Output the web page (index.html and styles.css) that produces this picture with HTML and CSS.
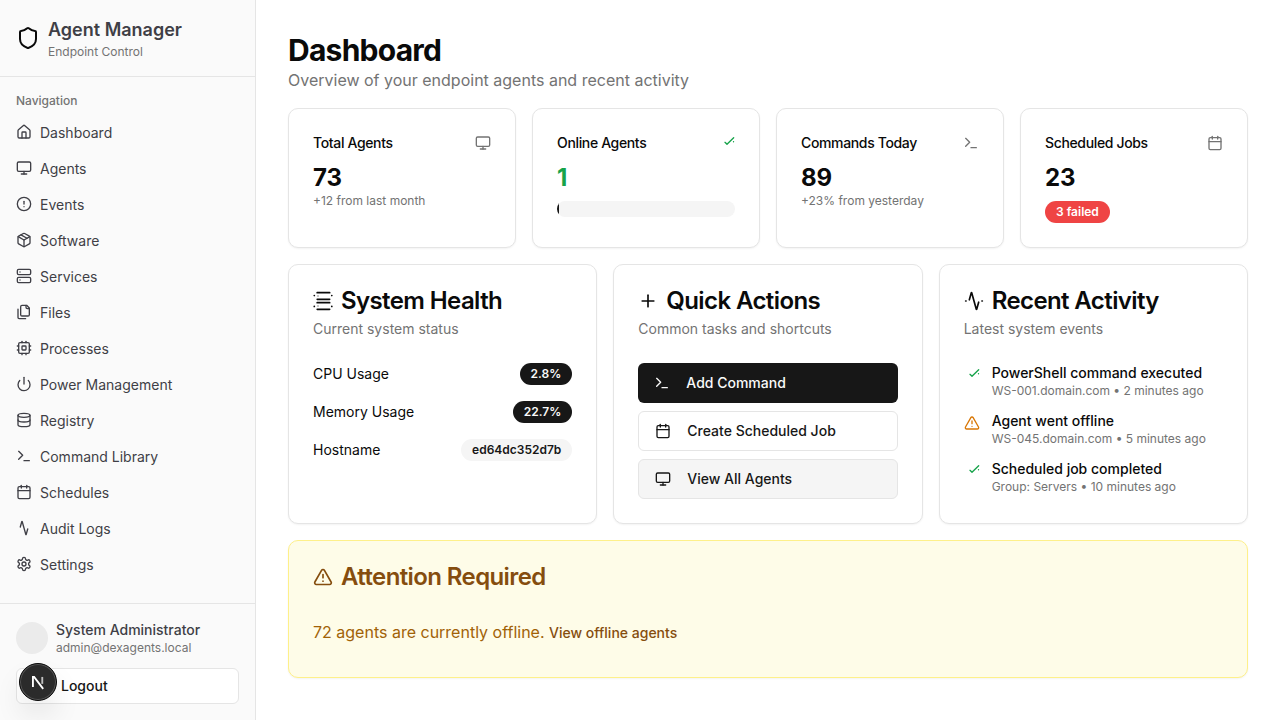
FILE: index.html
```html
<!DOCTYPE html>
<html>
<head>
	<meta charset="utf-8">
	<meta name="viewport" content="width=device-width, initial-scale=1">
	<title>Agent Manager</title>
	<link rel="stylesheet" href="styles.css">
</head>
<body>

<svg class="sprite" xmlns="http://www.w3.org/2000/svg">
	<symbol id="i-shield" viewBox="0 0 24 24"><path d="M20 13c0 5-3.500 7.500-7.660 8.950a1 1 0 0 1-.670-.010C7.500 20.500 4 18 4 13V6a1 1 0 0 1 1-1c2 0 4.500-1.200 6.240-2.720a1.170 1.170 0 0 1 1.520 0C14.510 3.810 17 5 19 5a1 1 0 0 1 1 1z"/></symbol>
	<symbol id="i-home" viewBox="0 0 24 24"><path d="M15 21v-8a1 1 0 0 0-1-1h-4a1 1 0 0 0-1 1v8"/><path d="M3 10a2 2 0 0 1 .709-1.528l7-5.999a2 2 0 0 1 2.582 0l7 5.999A2 2 0 0 1 21 10v9a2 2 0 0 1-2 2H5a2 2 0 0 1-2-2z"/></symbol>
	<symbol id="i-monitor" viewBox="0 0 24 24"><rect width="20" height="14" x="2" y="3" rx="2"/><line x1="8" x2="16" y1="21" y2="21"/><line x1="12" x2="12" y1="17" y2="21"/></symbol>
	<symbol id="i-alert" viewBox="0 0 24 24"><circle cx="12" cy="12" r="10"/><line x1="12" x2="12" y1="8" y2="12"/><line x1="12" x2="12.010" y1="16" y2="16"/></symbol>
	<symbol id="i-package" viewBox="0 0 24 24"><path d="M11 21.730a2 2 0 0 0 2 0l7-4A2 2 0 0 0 21 16V8a2 2 0 0 0-1-1.730l-7-4a2 2 0 0 0-2 0l-7 4A2 2 0 0 0 3 8v8a2 2 0 0 0 1 1.730z"/><path d="M12 22V12"/><path d="m3.300 7 8.700 5 8.700-5"/><path d="m7.500 4.270 9 5.150"/></symbol>
	<symbol id="i-server" viewBox="0 0 24 24"><rect width="20" height="8" x="2" y="2" rx="2"/><rect width="20" height="8" x="2" y="14" rx="2"/><line x1="6" x2="6.010" y1="6" y2="6"/><line x1="6" x2="6.010" y1="18" y2="18"/></symbol>
	<symbol id="i-server-open" viewBox="0 0 24 24"><path d="M5 2h15"/><path d="M5 10h15"/><path d="M5 14h15"/><path d="M5 22h15"/><path d="M1.500 5.500h.1"/><path d="M1.500 18.500h.1"/><path d="M22.500 5.500h.1"/><path d="M22.500 18.500h.1"/><path d="M6 6h.01" class="thin"/><path d="M6 18h.01" class="thin"/></symbol>
	<symbol id="i-files" viewBox="0 0 24 24"><path d="M20 7h-3a2 2 0 0 1-2-2V2"/><path d="M9 18a2 2 0 0 1-2-2V4a2 2 0 0 1 2-2h7l4 4v10a2 2 0 0 1-2 2Z"/><path d="M3 7.600v12.800A1.600 1.600 0 0 0 4.600 22h9.800"/></symbol>
	<symbol id="i-cpu" viewBox="0 0 24 24"><rect width="16" height="16" x="4" y="4" rx="2"/><rect width="6" height="6" x="9" y="9" rx="1"/><path d="M15 2v2"/><path d="M15 20v2"/><path d="M2 15h2"/><path d="M2 9h2"/><path d="M20 15h2"/><path d="M20 9h2"/><path d="M9 2v2"/><path d="M9 20v2"/></symbol>
	<symbol id="i-power" viewBox="0 0 24 24"><path d="M12 2v10"/><path d="M18.400 6.600a9 9 0 1 1-12.770.040"/></symbol>
	<symbol id="i-database" viewBox="0 0 24 24"><ellipse cx="12" cy="5" rx="9" ry="3"/><path d="M3 5v14a9 3 0 0 0 18 0V5"/><path d="M3 12a9 3 0 0 0 18 0"/></symbol>
	<symbol id="i-terminal" viewBox="0 0 24 24"><polyline points="4 17 10 11 4 5"/><line x1="12" x2="20" y1="19" y2="19"/></symbol>
	<symbol id="i-calendar" viewBox="0 0 24 24"><path d="M8 2v4"/><path d="M16 2v4"/><rect width="18" height="18" x="3" y="4" rx="2"/><path d="M3 10h18"/></symbol>
	<symbol id="i-activity" viewBox="0 0 24 24"><path d="M17.590 13.460l-2.350 8.360a.25.25 0 0 1-.480 0L9.240 2.180a.25.25 0 0 0-.480 0l-2.350 8.360"/></symbol>
	<symbol id="i-activity-dots" viewBox="0 0 24 24"><path d="M17.590 13.460l-2.350 8.360a.25.25 0 0 1-.480 0L9.240 2.180a.25.25 0 0 0-.480 0l-2.350 8.360"/><path d="M2 12h.5"/><path d="M21.500 12h.5"/></symbol>
	<symbol id="i-settings" viewBox="0 0 24 24"><path d="M12.220 2h-.440a2 2 0 0 0-2 2v.180a2 2 0 0 1-1 1.730l-.430.250a2 2 0 0 1-2 0l-.150-.080a2 2 0 0 0-2.730.730l-.220.380a2 2 0 0 0 .730 2.730l.150.100a2 2 0 0 1 1 1.720v.510a2 2 0 0 1-1 1.740l-.150.090a2 2 0 0 0-.730 2.730l.220.380a2 2 0 0 0 2.730.730l.150-.080a2 2 0 0 1 2 0l.430.250a2 2 0 0 1 1 1.730V20a2 2 0 0 0 2 2h.440a2 2 0 0 0 2-2v-.180a2 2 0 0 1 1-1.730l.430-.250a2 2 0 0 1 2 0l.150.080a2 2 0 0 0 2.730-.730l.220-.390a2 2 0 0 0-.730-2.730l-.150-.080a2 2 0 0 1-1-1.740v-.500a2 2 0 0 1 1-1.740l.150-.090a2 2 0 0 0 .730-2.730l-.220-.380a2 2 0 0 0-2.730-.730l-.150.080a2 2 0 0 1-2 0l-.430-.250a2 2 0 0 1-1-1.730V4a2 2 0 0 0-2-2z"/><circle cx="12" cy="12" r="3"/></symbol>
	<symbol id="i-check" viewBox="0 0 24 24"><path d="M21.800 10A10 10 0 1 1 17 3.340" class="faint"/><path d="m9 11 3 3L22 4"/></symbol>
	<symbol id="i-plus" viewBox="0 0 24 24"><path d="M5 12h14"/><path d="M12 5v14"/></symbol>
	<symbol id="i-warning" viewBox="0 0 24 24"><path d="m21.730 18-8-14a2 2 0 0 0-3.480 0l-8 14A2 2 0 0 0 4 21h16a2 2 0 0 0 1.730-3"/><path d="M12 9v4"/><path d="M12 17h.010"/></symbol>
	<symbol id="i-next" viewBox="0 0 180 180"><path d="M52 128V52h9l68 90"/><path d="M122 52v52" class="fade"/></symbol>
</svg>

<div class="layout">
	<aside class="sidebar">
		<div class="brand">
			<svg class="icon icon-brand"><use href="#i-shield"/></svg>
			<div>
				<div class="brand-name">Agent Manager</div>
				<div class="brand-sub">Endpoint Control</div>
			</div>
		</div>

		<nav class="nav">
			<div class="nav-label">Navigation</div>
			<a class="nav-item"><svg class="icon"><use href="#i-home"/></svg>Dashboard</a>
			<a class="nav-item"><svg class="icon"><use href="#i-monitor"/></svg>Agents</a>
			<a class="nav-item"><svg class="icon"><use href="#i-alert"/></svg>Events</a>
			<a class="nav-item"><svg class="icon"><use href="#i-package"/></svg>Software</a>
			<a class="nav-item"><svg class="icon"><use href="#i-server"/></svg>Services</a>
			<a class="nav-item"><svg class="icon"><use href="#i-files"/></svg>Files</a>
			<a class="nav-item"><svg class="icon"><use href="#i-cpu"/></svg>Processes</a>
			<a class="nav-item"><svg class="icon"><use href="#i-power"/></svg>Power Management</a>
			<a class="nav-item"><svg class="icon"><use href="#i-database"/></svg>Registry</a>
			<a class="nav-item"><svg class="icon"><use href="#i-terminal"/></svg>Command Library</a>
			<a class="nav-item"><svg class="icon"><use href="#i-calendar"/></svg>Schedules</a>
			<a class="nav-item"><svg class="icon"><use href="#i-activity"/></svg>Audit Logs</a>
			<a class="nav-item"><svg class="icon"><use href="#i-settings"/></svg>Settings</a>
		</nav>

		<div class="user-box">
			<div class="user">
				<div class="avatar"></div>
				<div>
					<div class="user-name">System Administrator</div>
					<div class="user-mail">admin@dexagents.local</div>
				</div>
			</div>
			<button class="logout">Logout</button>
		</div>
		<div class="next-badge"><svg class="icon icon-next"><use href="#i-next"/></svg></div>
	</aside>

	<main class="main">
		<h1>Dashboard</h1>
		<p class="subtitle">Overview of your endpoint agents and recent activity</p>

		<section class="stats">
			<div class="card stat">
				<div class="stat-head"><span>Total Agents</span><svg class="icon icon-muted"><use href="#i-monitor"/></svg></div>
				<div class="stat-num">73</div>
				<div class="stat-note">+12 from last month</div>
			</div>
			<div class="card stat">
				<div class="stat-head"><span>Online Agents</span><svg class="icon icon-green"><use href="#i-check"/></svg></div>
				<div class="stat-num green">1</div>
				<div class="progress"><div class="progress-fill" style="width: 1.4%"></div></div>
			</div>
			<div class="card stat">
				<div class="stat-head"><span>Commands Today</span><svg class="icon icon-muted"><use href="#i-terminal"/></svg></div>
				<div class="stat-num">89</div>
				<div class="stat-note">+23% from yesterday</div>
			</div>
			<div class="card stat">
				<div class="stat-head"><span>Scheduled Jobs</span><svg class="icon icon-muted"><use href="#i-calendar"/></svg></div>
				<div class="stat-num">23</div>
				<span class="badge badge-red">3 failed</span>
			</div>
		</section>

		<section class="panels">
			<div class="card panel">
				<h2><svg class="icon icon-title"><use href="#i-server-open"/></svg>System Health</h2>
				<p class="panel-sub">Current system status</p>
				<div class="health">
					<div class="health-row"><span>CPU Usage</span><span class="badge badge-dark">2.8%</span></div>
					<div class="health-row"><span>Memory Usage</span><span class="badge badge-dark">22.7%</span></div>
					<div class="health-row"><span>Hostname</span><span class="badge badge-light">ed64dc352d7b</span></div>
				</div>
			</div>

			<div class="card panel">
				<h2><svg class="icon icon-title"><use href="#i-plus"/></svg>Quick Actions</h2>
				<p class="panel-sub">Common tasks and shortcuts</p>
				<div class="actions">
					<button class="action action-dark"><svg class="icon"><use href="#i-terminal"/></svg>Add Command</button>
					<button class="action"><svg class="icon"><use href="#i-calendar"/></svg>Create Scheduled Job</button>
					<button class="action action-grey"><svg class="icon"><use href="#i-monitor"/></svg>View All Agents</button>
				</div>
			</div>

			<div class="card panel">
				<h2><svg class="icon icon-title"><use href="#i-activity-dots"/></svg>Recent Activity</h2>
				<p class="panel-sub">Latest system events</p>
				<div class="events">
					<div class="event">
						<svg class="icon icon-green"><use href="#i-check"/></svg>
						<div>
							<div class="event-title">PowerShell command executed</div>
							<div class="event-note">WS-001.domain.com • 2 minutes ago</div>
						</div>
					</div>
					<div class="event">
						<svg class="icon icon-amber"><use href="#i-warning"/></svg>
						<div>
							<div class="event-title">Agent went offline</div>
							<div class="event-note">WS-045.domain.com • 5 minutes ago</div>
						</div>
					</div>
					<div class="event">
						<svg class="icon icon-green"><use href="#i-check"/></svg>
						<div>
							<div class="event-title">Scheduled job completed</div>
							<div class="event-note">Group: Servers • 10 minutes ago</div>
						</div>
					</div>
				</div>
			</div>
		</section>

		<section class="alert">
			<h2><svg class="icon icon-title"><use href="#i-warning"/></svg>Attention Required</h2>
			<p>72 agents are currently offline. <a>View offline agents</a></p>
		</section>
	</main>
</div>

</body>
</html>
```

FILE: styles.css
```css
* {
	box-sizing: border-box;
}
body {
	font-family: Inter, "Liberation Sans", sans-serif;
	margin: 0;
	background-color: #fff;
	color: #0a0a0a;
	overflow: hidden;
}
.sprite {
	display: none;
}
.icon {
	width: 16px;
	height: 16px;
	flex-shrink: 0;
	fill: none;
	stroke: currentColor;
	stroke-width: 2;
	stroke-linecap: round;
	stroke-linejoin: round;
}
.layout {
	display: flex;
	height: 720px;
}

/* Sidebar */
.sidebar {
	width: 256px;
	height: 720px;
	flex-shrink: 0;
	display: flex;
	flex-direction: column;
	background-color: #fafafa;
	border-right: 1px solid #e5e5e5;
	position: relative;
	color: #3f3f46;
}
.brand {
	height: 77px;
	display: flex;
	align-items: center;
	gap: 8px;
	padding: 0 16px;
	border-bottom: 1px solid #e5e5e5;
}
.icon-brand {
	width: 24px;
	height: 24px;
	color: #0a0a0a;
}
.brand-name {
	font-size: 18px;
	line-height: 28px;
	font-weight: 600;
}
.brand-sub {
	font-size: 12px;
	line-height: 16px;
	color: #737373;
}
.nav {
	flex: 1;
	padding: 16px 16px 0;
}
.nav-label {
	font-size: 12px;
	font-weight: 500;
	line-height: 16px;
	color: #737373;
	margin-bottom: 5px;
}
.nav-item {
	height: 36px;
	display: flex;
	align-items: center;
	gap: 8px;
	font-size: 14px;
}
.user-box {
	border-top: 1px solid #e5e5e5;
	height: 117px;
	padding: 16px;
}
.user {
	display: flex;
	align-items: center;
	gap: 8px;
	height: 36px;
	margin-bottom: 12px;
}
.avatar {
	width: 32px;
	height: 32px;
	border-radius: 50%;
	background-color: #ebebeb;
}
.user-name {
	font-size: 14px;
	font-weight: 500;
	line-height: 20px;
}
.user-mail {
	font-size: 12px;
	line-height: 16px;
	color: #737373;
}
.logout {
	width: 223px;
	height: 36px;
	display: block;
	padding: 0 0 1px 44px;
	text-align: left;
	font-family: inherit;
	font-size: 14px;
	line-height: 20px;
	font-weight: 500;
	color: #171717;
	background-color: #fff;
	border: 1px solid #e5e5e5;
	border-radius: 6px;
}
.next-badge {
	position: absolute;
	left: 19px;
	top: 663px;
	width: 38px;
	height: 38px;
	border-radius: 50%;
	display: flex;
	align-items: center;
	justify-content: center;
	background-color: #2b2b2b;
	border: 1px solid #0a0a0a;
	box-shadow: 0 0 0 1px #555 inset, 0 16px 32px -8px rgba(0, 0, 0, 0.24);
}
.icon-next {
	width: 24px;
	height: 24px;
	color: #fff;
	stroke-width: 14;
	stroke-linecap: butt;
	stroke-linejoin: miter;
}
.fade {
	opacity: 0.7;
}

/* Main */
.main {
	flex: 1;
	padding: 32px;
}
h1 {
	margin: 0;
	font-size: 30px;
	line-height: 36px;
	font-weight: 700;
	letter-spacing: -0.75px;
}
.subtitle {
	margin: 0;
	font-size: 16px;
	line-height: 24px;
	color: #737373;
}
.card {
	background-color: #fff;
	border: 1px solid #e5e5e5;
	border-radius: 10px;
	box-shadow: 0 1px 2px rgba(0, 0, 0, 0.05);
}
.stats {
	display: grid;
	grid-template-columns: repeat(4, 1fr);
	gap: 16px;
	margin-top: 16px;
}
.stat {
	height: 140px;
	padding: 24px;
}
.stat-head {
	display: flex;
	justify-content: space-between;
	align-items: flex-start;
	font-size: 14px;
	font-weight: 500;
	line-height: 20px;
	letter-spacing: -0.35px;
}
.stat-head .icon {
	margin-top: 2px;
}
.icon-muted {
	color: #737373;
}
.icon-green {
	color: #16a34a;
}
.icon-amber {
	color: #d97706;
}
.faint {
	stroke-dasharray: 0.1 60;
}
.thin {
	opacity: 0.5;
}
.stat-num {
	margin-top: 9px;
	font-size: 24px;
	line-height: 32px;
	font-weight: 700;
}
.green {
	color: #16a34a;
}
.stat-note {
	margin-top: -1px;
	font-size: 12px;
	line-height: 16px;
	color: #737373;
}
.progress {
	height: 16px;
	margin-top: 7px;
	background-color: #f5f5f5;
	border-radius: 999px;
	overflow: hidden;
}
.progress-fill {
	height: 100%;
	background-color: #171717;
}
.badge {
	display: inline-block;
	font-size: 12px;
	line-height: 16px;
	font-weight: 600;
	padding: 3px 11px;
	border-radius: 999px;
}
.stat .badge {
	margin-top: 7px;
}
.badge-red {
	background-color: #ef4444;
	color: #fff;
}
.badge-dark {
	background-color: #171717;
	color: #fafafa;
}
.badge-light {
	background-color: #f5f5f5;
	color: #171717;
}

/* Panels */
.panels {
	display: grid;
	grid-template-columns: repeat(3, 1fr);
	gap: 16px;
	margin-top: 16px;
}
.panel {
	height: 260px;
	padding: 24px;
}
h2 {
	display: flex;
	align-items: center;
	gap: 8px;
	margin: 0;
	font-size: 24px;
	line-height: 24px;
	font-weight: 600;
	letter-spacing: -0.6px;
}
.icon-title {
	width: 20px;
	height: 20px;
}
.panel-sub {
	margin: 6px 0 0;
	font-size: 14px;
	line-height: 20px;
	color: #737373;
}
.health {
	margin-top: 24px;
	display: flex;
	flex-direction: column;
	gap: 16px;
	font-size: 14px;
	line-height: 20px;
}
.health-row {
	display: flex;
	justify-content: space-between;
	align-items: center;
	height: 22px;
}
.actions {
	margin-top: 24px;
	display: flex;
	flex-direction: column;
	gap: 8px;
}
.action {
	height: 40px;
	display: flex;
	align-items: center;
	gap: 16px;
	padding: 0 16px;
	font-family: inherit;
	font-size: 14px;
	line-height: 20px;
	font-weight: 500;
	color: #171717;
	background-color: #fff;
	border: 1px solid #e5e5e5;
	border-radius: 6px;
}
.action-dark {
	background-color: #171717;
	border: 0;
	color: #fafafa;
}
.action-grey {
	background-color: #f5f5f5;
}
.events {
	margin-top: 24px;
	display: flex;
	flex-direction: column;
	gap: 12px;
}
.event {
	display: flex;
	align-items: flex-start;
	gap: 12px;
}
.event .icon {
	margin-top: 3.5px;
}
.event-title {
	font-size: 14px;
	font-weight: 500;
	line-height: 20px;
}
.event-note {
	font-size: 12px;
	line-height: 16px;
	color: #737373;
}

/* Alert */
.alert {
	height: 138px;
	margin-top: 16px;
	padding: 24px;
	background-color: #fefce8;
	border: 1px solid #fef08a;
	border-radius: 10px;
	box-shadow: 0 1px 2px rgba(0, 0, 0, 0.05);
}
.alert h2 {
	color: #854d0e;
}
.alert p {
	margin: 31px 0 0;
	font-size: 16px;
	line-height: 24px;
	color: #a16207;
}
.alert a {
	font-size: 14px;
	font-weight: 500;
	color: #854d0e;
}
```
